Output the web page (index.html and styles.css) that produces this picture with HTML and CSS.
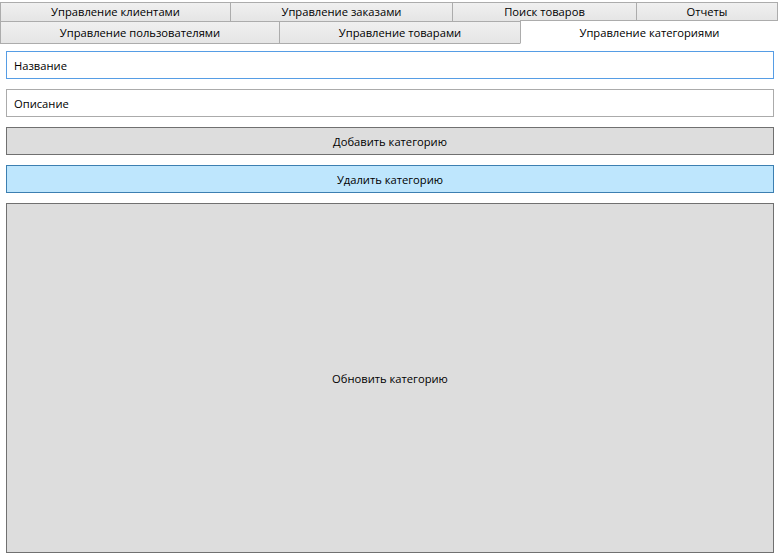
FILE: index.html
```html
<!DOCTYPE html>
<html lang="ru">
<head>
<meta charset="utf-8">
<title>Управление категориями</title>
<link rel="stylesheet" href="styles.css">
</head>
<body>
<div class="window">
  <div class="tabstrip">
    <div class="tabrow row1">
      <div class="tab w231">Управление клиентами</div>
      <div class="tab w222">Управление заказами</div>
      <div class="tab w184">Поиск товаров</div>
      <div class="tab w141">Отчеты</div>
    </div>
    <div class="tabrow row2">
      <div class="tab w279">Управление пользователями</div>
      <div class="tab w241">Управление товарами</div>
      <div class="tab w258 selected">Управление категориями</div>
    </div>
  </div>
  <div class="content">
    <input class="field focused" type="text" value="Название">
    <input class="field" type="text" value="Описание">
    <button class="btn">Добавить категорию</button>
    <button class="btn hover">Удалить категорию</button>
    <button class="btn big">Обновить категорию</button>
  </div>
</div>
</body>
</html>
```

FILE: styles.css
```css
* { box-sizing: border-box; }
html, body {
  margin: 0;
  padding: 0;
  background: #ffffff;
}
body {
  width: 778px;
  height: 558px;
  overflow: hidden;
  font-family: "Open Sans", "Noto Sans", sans-serif;
  font-size: 11.2px;
  color: #000000;
}
.window {
  display: flex;
  flex-direction: column;
  height: 558px;
}
.tabstrip {
  padding-top: 2px;
  display: flex;
  flex-direction: column;
}
.tabrow {
  display: flex;
}
.row1 { height: 20px; }
.row2 { height: 23px; margin-top: -1px; }
.tab {
  flex: none;
  border: 1px solid #acacac;
  background: linear-gradient(#f0f0f0, #e5e5e5);
  display: flex;
  align-items: center;
  justify-content: center;
  white-space: nowrap;
  padding-bottom: 1px;
}
.tab + .tab { margin-left: -1px; }
.w231 { width: 231px; }
.w222 { width: 223px; }
.w184 { width: 185px; }
.w141 { width: 142px; }
.w279 { width: 280px; }
.w241 { width: 242px; }
.w258 { width: 259px; }
.tab.selected {
  background: #ffffff;
  border-bottom-color: #ffffff;
  margin-top: -1px;
  height: 24px;
  position: relative;
  z-index: 1;
  padding-bottom: 0;
}
.content {
  flex: 1;
  display: flex;
  flex-direction: column;
  gap: 10px;
  padding: 7px 4px 5px 6px;
}
.field {
  height: 28px;
  width: 100%;
  border: 1px solid #ababab;
  background: #ffffff;
  font: inherit;
  color: #000000;
  padding: 0 7px;
  margin: 0;
  outline: none;
}
.field.focused { border-color: #569de5; }
.btn {
  height: 28px;
  width: 100%;
  margin: 0;
  border: 1px solid #707070;
  background: #dddddd;
  font: inherit;
  color: #000000;
  padding: 0;
}
.btn.hover {
  background: #bee6fd;
  border-color: #3c7fb1;
}
.btn.big {
  flex: 1;
  height: auto;
}
```
